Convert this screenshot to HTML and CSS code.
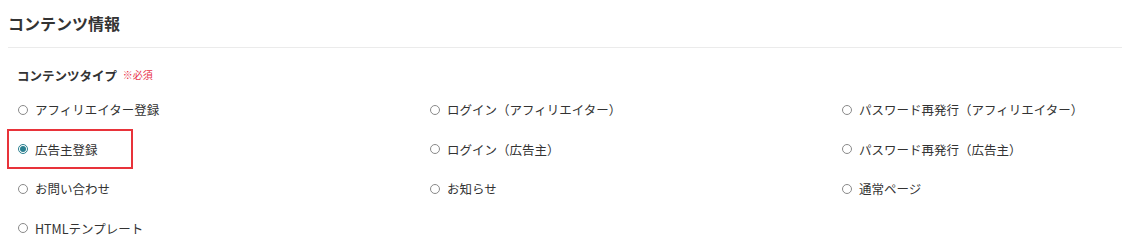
FILE: index.html
```html
<!DOCTYPE html>
<html lang="ja">
<head>
<meta charset="utf-8">
<link rel="stylesheet" href="styles.css">
</head>
<body>
<div class="page">
  <h2 class="section-title">コンテンツ情報</h2>
  <div class="field">
    <div class="field-label">コンテンツタイプ <span class="required">※必須</span></div>
    <div class="radio-grid">
      <label class="radio"><span class="dot"></span><span class="text">アフィリエイター登録</span></label>
      <label class="radio"><span class="dot"></span><span class="text">ログイン（アフィリエイター）</span></label>
      <label class="radio"><span class="dot"></span><span class="text">パスワード再発行（アフィリエイター）</span></label>
      <label class="radio checked highlight"><span class="dot"></span><span class="text">広告主登録</span></label>
      <label class="radio"><span class="dot"></span><span class="text">ログイン（広告主）</span></label>
      <label class="radio"><span class="dot"></span><span class="text">パスワード再発行（広告主）</span></label>
      <label class="radio"><span class="dot"></span><span class="text">お問い合わせ</span></label>
      <label class="radio"><span class="dot"></span><span class="text">お知らせ</span></label>
      <label class="radio"><span class="dot"></span><span class="text">通常ページ</span></label>
      <label class="radio"><span class="dot"></span><span class="text">HTMLテンプレート</span></label>
    </div>
  </div>
</div>
</body>
</html>
```
FILE: styles.css
```css
html, body {
  margin: 0;
  padding: 0;
  background: #fff;
}
body {
  font-family: "Noto Sans CJK JP", "Noto Sans", sans-serif;
  color: #333;
  overflow: hidden;
}
.page {
  padding-left: 8px;
}
.section-title {
  margin: 0;
  padding-top: 11px;
  height: 36px;
  font-size: 16px;
  line-height: 24px;
  font-weight: bold;
  color: #333;
  border-bottom: 1px solid #ebebeb;
  box-sizing: content-box;
}
.field {
  padding-left: 9px;
}
.field-label {
  margin-top: 18px;
  font-size: 12.5px;
  line-height: 18px;
  font-weight: bold;
  color: #333;
}
.required {
  color: #e8334a;
  font-size: 10px;
  font-weight: normal;
  margin-left: 3px;
  vertical-align: 2px;
}
.radio-grid {
  display: grid;
  grid-template-columns: repeat(3, 412px);
  grid-auto-rows: 39.5px;
  margin-top: 5px;
}
.radio {
  display: flex;
  align-items: center;
  font-size: 12.5px;
  color: #333;
  justify-self: start;
  align-self: center;
  height: 20px;
}
.dot {
  width: 10px;
  height: 10px;
  border: 1px solid #8a8a8a;
  border-radius: 50%;
  box-sizing: border-box;
  margin-left: 1px;
  margin-right: 7px;
  flex: none;
  display: flex;
  align-items: center;
  justify-content: center;
}
.checked .dot {
  border-color: #2a8090;
}
.checked .dot::after {
  content: "";
  width: 6px;
  height: 6px;
  border-radius: 50%;
  background: #2a8090;
}
.highlight {
  width: 106px;
  outline: 2px solid #e8333a;
  outline-offset: 8px;
}
```
